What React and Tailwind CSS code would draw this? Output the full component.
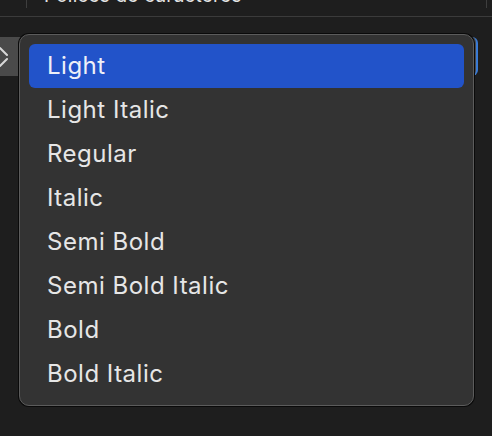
const items = ['Light', 'Light Italic', 'Regular', 'Italic', 'Semi Bold', 'Semi Bold Italic', 'Bold', 'Bold Italic'];

const App = () => {
    const selected = 'Light';

    return (
        <div
            className="relative w-[492px] h-[436px] overflow-hidden bg-[#1e1e1e]"
            style={{ fontFamily: 'Inter, "Noto Sans", sans-serif' }}
        >
            {/* header row, mostly scrolled off */}
            <div className="h-[17px] border-b border-[#3b3b3b] flex">
                <div className="w-[27px] h-[8px] border-r border-[#3e3e3e]" />
                <div className="flex-1 h-[8px] overflow-hidden">
                    <div className="ml-[17px] -mt-[14px] text-[19px] leading-[19px] tracking-[0.2px] text-[#e4e4e4]">Polices de caractères</div>
                </div>
                <div className="w-[6px] h-[8px] border-l border-[#3e3e3e]" />
            </div>

            {/* popup button underneath the menu */}
            <div className="mt-[20px] ml-[-20px] w-[498px] h-[39px] rounded-[6px] bg-[#4a4a4a] border-r-2 border-[#3a7bd5] flex items-center">
                <svg width="20" height="22" viewBox="0 0 20 22" className="ml-[10px]" fill="none" stroke="#d8d8d8" strokeWidth="2" strokeLinecap="round" strokeLinejoin="round">
                    <path d="M3 9 L10 2 L17 9" />
                    <path d="M3 13 L10 20 L17 13" />
                </svg>
            </div>

            {/* menu */}
            <div className="absolute left-[19px] top-[34px] w-[455px] h-[372px] rounded-[10px] bg-[#333333] border border-[#5c5c5c] shadow-[0_0_0_1px_#0a0a0a] p-[9px]">
                {items.map((item) => (
                    <div
                        key={item}
                        className={
                            item === selected
                                ? 'h-[44px] rounded-[6px] bg-[#2253c9] flex items-center pl-[18px] text-[24px] tracking-[0.5px] text-[#eef0f8]'
                                : 'h-[44px] rounded-[6px] flex items-center pl-[18px] text-[24px] tracking-[0.5px] text-[#e6e6e6]'
                        }
                    >
                        {item}
                    </div>
                ))}
            </div>
        </div>
    );
};

export default App;
